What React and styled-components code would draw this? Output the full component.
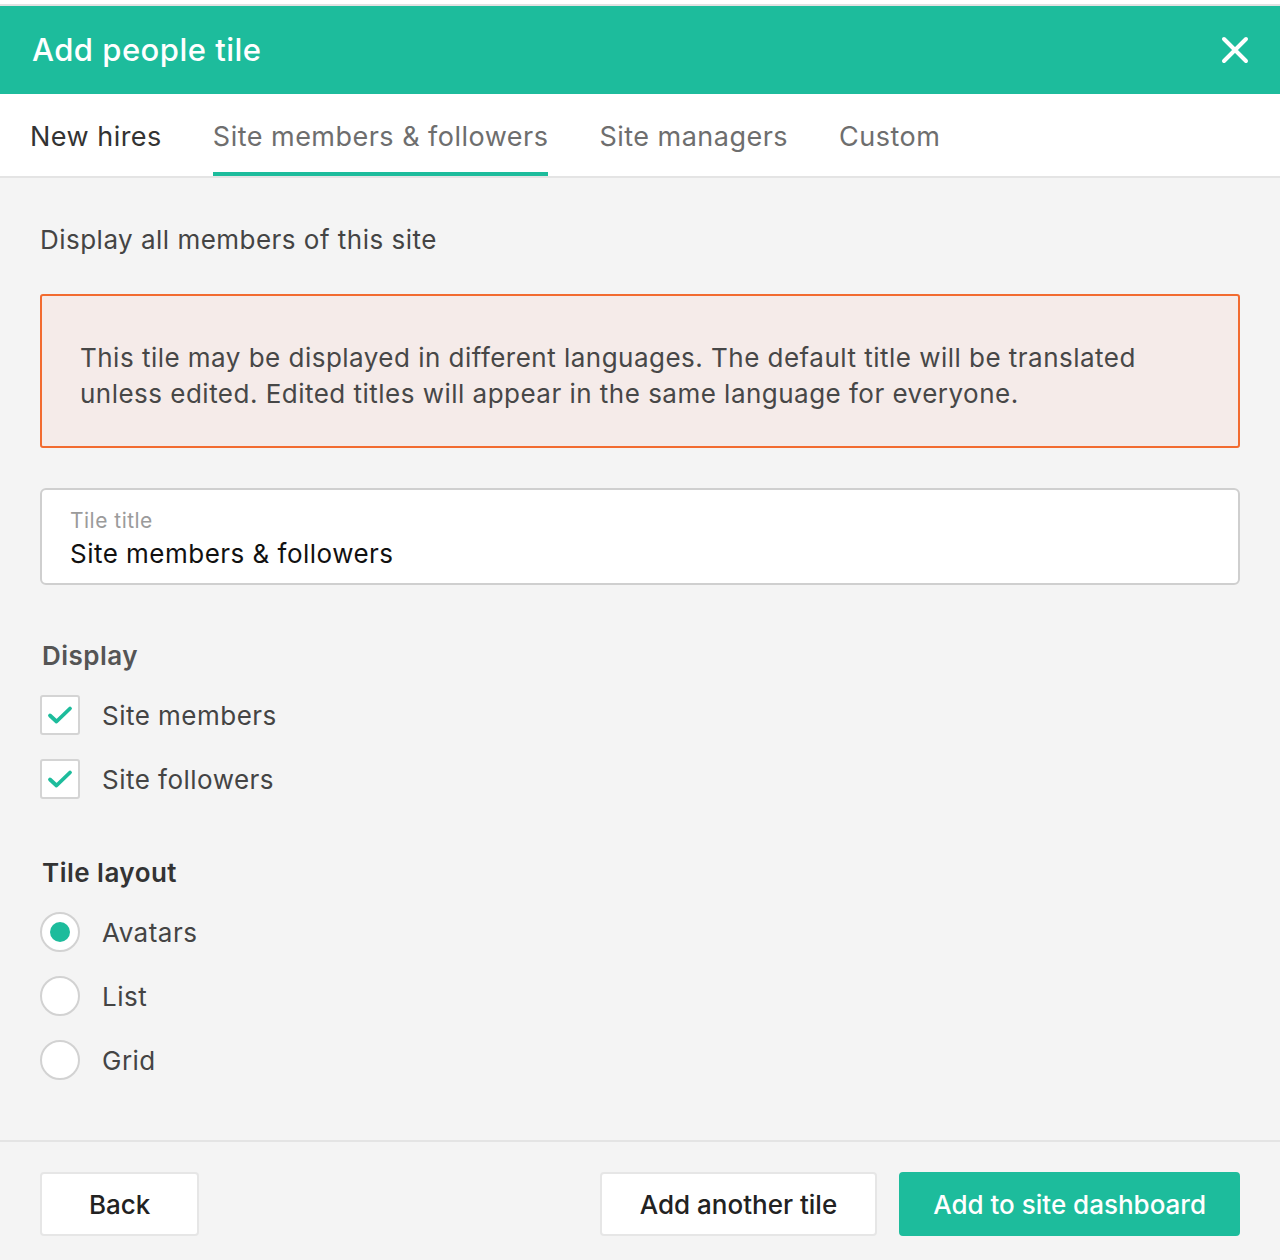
import { useState } from "react"
import styled, { createGlobalStyle } from "styled-components"

const teal = "#1dbc9c"

const GlobalStyle = createGlobalStyle`
  body {
    margin: 0;
    background: #f4f4f4;
    font-family: Inter, "Open Sans", sans-serif;
    letter-spacing: 0.03em;
  }
`

const Modal = styled.div`
  box-sizing: border-box;
  width: 1280px;
  min-height: 1260px;
  display: flex;
  flex-direction: column;
  background: #f4f4f4;
  border-top: 4px solid #fff;
`

const Header = styled.div`
  height: 88px;
  border-top: 2px solid #e2e2e2;
  background: ${teal};
  display: flex;
  align-items: center;
  justify-content: space-between;
  padding: 0 30px 0 32px;
`

const Title = styled.h1`
  margin: 0 0 2px;
  color: #fff;
  font-size: 31px;
  font-weight: 500;
`

const CloseButton = styled.button`
  border: 0;
  background: none;
  padding: 0;
  width: 30px;
  height: 30px;
  cursor: pointer;
  display: flex;
`

const Tabs = styled.div`
  height: 82px;
  background: #fff;
  border-bottom: 2px solid #e4e4e4;
  display: flex;
  gap: 51px;
  padding-left: 30px;
`

const Tab = styled.div`
  height: 100%;
  display: flex;
  align-items: center;
  padding-top: 6px;
  box-sizing: border-box;
  font-size: 27px;
  color: ${props => props.$dark ? "#333" : "#6e6e6e"};
  border-bottom: 4px solid ${props => props.$active ? teal : "transparent"};
  margin-bottom: -2px;
  cursor: pointer;
`

const Body = styled.div`
  flex: 1;
  padding: 46px 40px 0;
  display: flex;
  flex-direction: column;
`

const Intro = styled.p`
  margin: 0;
  font-size: 26px;
  color: #444;
`

const Notice = styled.div`
  margin-top: 39px;
  border: 2px solid #f26b30;
  border-radius: 3px;
  background: #f5ebe9;
  padding: 44px 60px 34px 38px;
  font-size: 26px;
  line-height: 36px;
  color: #474747;
`

const Field = styled.label`
  margin-top: 40px;
  display: flex;
  flex-direction: column;
  background: #fff;
  border: 2px solid #cfcfcf;
  border-radius: 6px;
  padding: 17px 28px 10px;
`

const FieldLabel = styled.span`
  font-size: 21px;
  color: #9b9b9b;
  line-height: 28px;
`

const FieldInput = styled.input`
  border: 0;
  outline: none;
  padding: 0;
  font: inherit;
  letter-spacing: inherit;
  font-size: 26px;
  line-height: 38px;
  color: #111;
  background: transparent;
`

const SectionTitle = styled.h3`
  margin: ${props => props.$top}px 0 24px 2px;
  font-size: 26px;
  font-weight: 600;
  color: ${props => props.$color};
`

const OptionRow = styled.label`
  display: flex;
  align-items: center;
  gap: 22px;
  height: 40px;
  margin-bottom: ${props => props.$gap}px;
  font-size: 26px;
  color: #444;
  cursor: pointer;
`

const CheckBox = styled.span`
  width: 36px;
  height: 36px;
  border: 2px solid #d4d4d4;
  border-radius: 3px;
  background: #fff;
  display: flex;
  align-items: center;
  justify-content: center;
`

const RadioCircle = styled.span`
  width: 36px;
  height: 36px;
  border: 2px solid #d2d2d2;
  border-radius: 50%;
  background: #fff;
  display: flex;
  align-items: center;
  justify-content: center;

  &::after {
    content: "";
    width: 20px;
    height: 20px;
    border-radius: 50%;
    background: ${teal};
    display: ${props => props.$on ? "block" : "none"};
  }
`

const Footer = styled.div`
  margin-top: 30px;
  border-top: 2px solid #e4e4e4;
  padding: 30px 40px 24px;
  display: flex;
  gap: 22px;
`

const Button = styled.button`
  height: 64px;
  padding: 0 ${props => props.$pad}px;
  border-radius: 4px;
  border: 2px solid ${props => props.$primary ? teal : "#e6e6e6"};
  background: ${props => props.$primary ? teal : "#fff"};
  color: ${props => props.$primary ? "#fff" : "#222"};
  font-family: inherit;
  font-size: 26px;
  font-weight: 500;
  letter-spacing: 0;
  cursor: pointer;
  margin-right: ${props => props.$push ? "auto" : "0"};
`

const CheckMark = () => (
  <svg width="26" height="20" viewBox="0 0 26 20">
    <path d="M3 10.5 L9.5 16.5 L23 3.5" fill="none" stroke={teal} strokeWidth="3.8" strokeLinecap="round" strokeLinejoin="round" />
  </svg>
)

const tabs = ["New hires", "Site members & followers", "Site managers", "Custom"]

const App = () => {
  const [layout, setLayout] = useState("Avatars")
  const [title, setTitle] = useState("Site members & followers")

  return (
    <>
      <GlobalStyle />
      <Modal>
        <Header>
          <Title>Add people tile</Title>
          <CloseButton aria-label="Close">
            <svg width="30" height="30" viewBox="0 0 30 30">
              <path d="M4 4 L26 26 M26 4 L4 26" stroke="#fff" strokeWidth="4" strokeLinecap="round" />
            </svg>
          </CloseButton>
        </Header>
        <Tabs>
          {tabs.map((t, i) => (
            <Tab key={t} $active={i === 1} $dark={i === 0}>{t}</Tab>
          ))}
        </Tabs>
        <Body>
          <Intro>Display all members of this site</Intro>
          <Notice>
            This tile may be displayed in different languages. The default title will be translated
            unless edited. Edited titles will appear in the same language for everyone.
          </Notice>
          <Field>
            <FieldLabel>Tile title</FieldLabel>
            <FieldInput value={title} onChange={e => setTitle(e.target.value)} />
          </Field>

          <SectionTitle $top={55} $color="#555">Display</SectionTitle>
          <OptionRow $gap={24}><CheckBox><CheckMark /></CheckBox>Site members</OptionRow>
          <OptionRow $gap={24}><CheckBox><CheckMark /></CheckBox>Site followers</OptionRow>

          <SectionTitle $top={34} $color="#333">Tile layout</SectionTitle>
          {["Avatars", "List", "Grid"].map(l => (
            <OptionRow key={l} $gap={24} onClick={() => setLayout(l)}>
              <RadioCircle $on={layout === l} />
              {l}
            </OptionRow>
          ))}
        </Body>
        <Footer>
          <Button $pad={47} $push>Back</Button>
          <Button $pad={38}>Add another tile</Button>
          <Button $pad={32} $primary>Add to site dashboard</Button>
        </Footer>
      </Modal>
    </>
  )
}

export default App
